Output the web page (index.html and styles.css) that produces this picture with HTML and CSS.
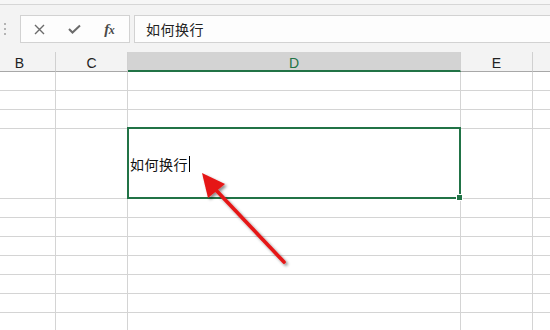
FILE: index.html
```html
<!DOCTYPE html>
<html lang="zh">
<head>
<meta charset="utf-8">
<link rel="stylesheet" href="styles.css">
</head>
<body>
<div class="app">
  <div class="topstrip"></div>
  <div class="toolbar">
    <div class="grip"><span></span><span></span><span></span></div>
    <div class="btnbox">
      <div class="slot slot-x">
        <svg width="11" height="11" viewBox="0 0 11 11"><path d="M1 1 L10 10 M10 1 L1 10" stroke="#6b6b6b" stroke-width="1.4" fill="none"/></svg>
      </div>
      <div class="slot slot-ok">
        <svg width="13" height="10" viewBox="0 0 13 10"><path d="M1 5 L4.5 8.5 L12 1.5" stroke="#6b6b6b" stroke-width="2" fill="none"/></svg>
      </div>
      <div class="slot slot-fx"><span class="fx">f<span class="fx-x">x</span></span></div>
    </div>
    <div class="formula">如何换行</div>
  </div>
  <div class="sheet">
    <div class="hd">B</div><div class="hd">C</div><div class="hd hd-sel">D</div><div class="hd">E</div><div class="hd"></div>

    <div class="c"></div><div class="c"></div><div class="c"></div><div class="c"></div><div class="c"></div>
    <div class="c"></div><div class="c"></div><div class="c"></div><div class="c"></div><div class="c"></div>
    <div class="c"></div><div class="c"></div><div class="c"></div><div class="c"></div><div class="c"></div>

    <div class="c"></div><div class="c"></div><div class="c active"><span class="celltext">如何换行</span><span class="caret"></span><span class="handle"></span></div><div class="c"></div><div class="c"></div>

    <div class="c"></div><div class="c"></div><div class="c"></div><div class="c"></div><div class="c"></div>
    <div class="c"></div><div class="c"></div><div class="c"></div><div class="c"></div><div class="c"></div>
    <div class="c"></div><div class="c"></div><div class="c"></div><div class="c"></div><div class="c"></div>
    <div class="c"></div><div class="c"></div><div class="c"></div><div class="c"></div><div class="c"></div>
    <div class="c"></div><div class="c"></div><div class="c"></div><div class="c"></div><div class="c"></div>
    <div class="c"></div><div class="c"></div><div class="c"></div><div class="c"></div><div class="c"></div>
    <div class="c"></div><div class="c"></div><div class="c"></div><div class="c"></div><div class="c"></div>
  </div>
  <svg class="arrow" width="550" height="330" viewBox="0 0 550 330">
    <defs>
      <filter id="sh" x="-20%" y="-20%" width="140%" height="140%">
        <feDropShadow dx="2" dy="2" stdDeviation="1.6" flood-color="#000" flood-opacity="0.45"/>
      </filter>
    </defs>
    <g filter="url(#sh)">
      <line x1="284" y1="262" x2="214" y2="188" stroke="#e51515" stroke-width="3.6" stroke-linecap="round"/>
      <polygon points="202,173 225,184 208,198" fill="#e51515"/>
    </g>
  </svg>
</div>
</body>
</html>
```

FILE: styles.css
```css
html, body {
  margin: 0;
  padding: 0;
  background: #ffffff;
}
body {
  font-family: "Liberation Sans", "Noto Sans CJK SC", sans-serif;
  color: #222;
}
.app {
  position: relative;
  width: 550px;
  height: 330px;
  overflow: hidden;
}
.topstrip {
  height: 4px;
  background: #f6f6f6;
  border-bottom: 1px solid #d6d6d6;
}
.toolbar {
  height: 47px;
  background: #f3f3f3;
  display: flex;
  align-items: flex-start;
  padding-top: 10px;
  box-sizing: border-box;
}
.grip {
  width: 20px;
  height: 28px;
  display: flex;
  flex-direction: column;
  align-items: flex-start;
  justify-content: center;
  gap: 3px;
  padding-left: 4px;
  box-sizing: border-box;
}
.grip span {
  width: 2px;
  height: 2px;
  background: #b3b3b3;
}
.btnbox {
  width: 110px;
  height: 28px;
  box-sizing: border-box;
  background: #fdfdfd;
  border: 1px solid #d2d2d2;
  display: flex;
  align-items: center;
}
.slot {
  height: 100%;
  display: flex;
  align-items: center;
  justify-content: center;
}
.slot-x { width: 38px; }
.slot-ok { width: 32px; }
.slot-fx { width: 40px; }
.fx {
  font-family: "Liberation Serif", serif;
  font-style: italic;
  font-weight: bold;
  font-size: 15px;
  color: #4a4a4a;
  letter-spacing: -0.5px;
}
.fx-x {
  font-size: 12px;
}
.formula {
  flex: 1;
  margin-left: 4px;
  margin-right: -2px;
  height: 28px;
  box-sizing: border-box;
  background: #fdfdfd;
  border: 1px solid #d2d2d2;
  padding-left: 11px;
  display: flex;
  align-items: center;
  font-family: "Noto Sans CJK SC", sans-serif;
  font-size: 14px;
  letter-spacing: 0.5px;
  color: #222;
}
.sheet {
  margin-left: -16px;
  display: grid;
  grid-template-columns: 72px 72px 333px 72px 100px;
  grid-template-rows: 20px 19px 19px 19px 70px 19px 19px 19px 19px 19px 19px 19px;
}
.hd {
  box-sizing: border-box;
  background: #f3f3f3;
  border-right: 1px solid #d0d0d0;
  border-bottom: 1px solid #a8a8a8;
  display: flex;
  align-items: center;
  justify-content: center;
  padding-top: 3px;
  font-size: 14px;
  color: #222;
}
.hd-sel {
  background: #d3d3d3;
  color: #217346;
  border-bottom: 2px solid #217346;
  padding-top: 4px;
}
.c {
  box-sizing: border-box;
  border-right: 1px solid #d4d4d4;
  border-bottom: 1px solid #d4d4d4;
  background: #fff;
}
.active {
  position: relative;
  display: flex;
  align-items: center;
  padding-left: 2px;
  padding-top: 1px;
}
.active::before {
  content: "";
  position: absolute;
  top: -2px;
  left: -1px;
  right: -1px;
  bottom: -1px;
  border: 2px solid #217346;
}
.celltext {
  font-family: "Noto Sans CJK SC", sans-serif;
  font-size: 14px;
  letter-spacing: 0.5px;
  color: #111;
}
.caret {
  width: 1px;
  height: 16px;
  background: #000;
  margin-left: 1px;
}
.handle {
  position: absolute;
  right: -3px;
  bottom: -3px;
  width: 5px;
  height: 5px;
  background: #217346;
  border: 1px solid #fff;
}
.arrow {
  position: absolute;
  left: 0;
  top: 0;
  pointer-events: none;
}
```
